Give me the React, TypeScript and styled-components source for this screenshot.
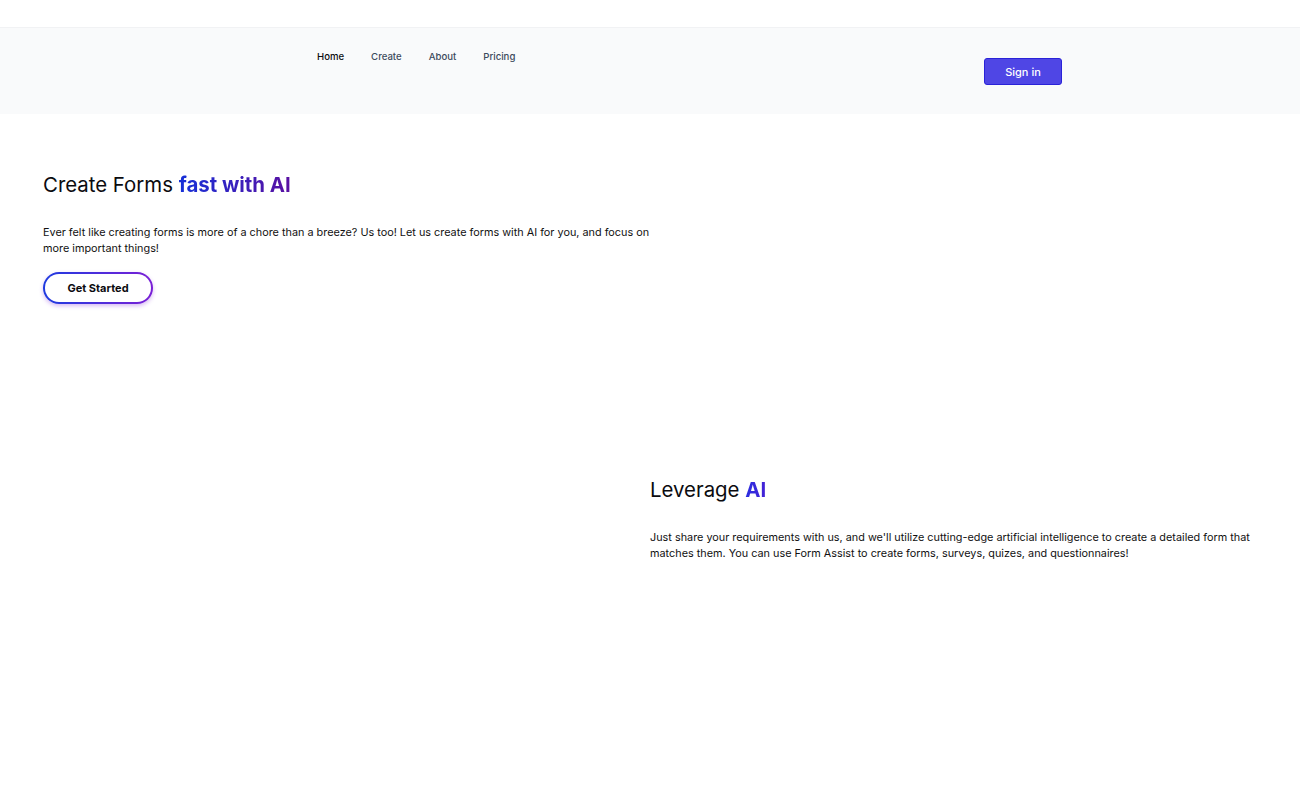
import React from 'react'
import styled, { createGlobalStyle } from 'styled-components'

const GlobalStyle = createGlobalStyle`
  * {
    box-sizing: border-box;
  }

  body {
    margin: 0;
    background: #ffffff;
    font-family: Inter, "Noto Sans", sans-serif;
    color: #111111;
  }
`

const links = ['Home', 'Create', 'About', 'Pricing']

export default function App() {
  return (
    <>
      <GlobalStyle />
      <TopStrip />
      <Nav>
        <Links>
          {links.map((link, index) => (
            <NavLink key={link} href="#" $active={index === 0}>
              {link}
            </NavLink>
          ))}
        </Links>
        <SignIn>Sign in</SignIn>
      </Nav>

      <Hero>
        <Column>
          <Title>
            Create Forms <Highlight>fast with AI</Highlight>
          </Title>
          <Text>
            Ever felt like creating forms is more of a chore than a breeze? Us too! Let us create forms
            with AI for you, and focus on more important things!
          </Text>
          <GetStarted>Get Started</GetStarted>
        </Column>
        <div />
      </Hero>

      <Feature>
        <div />
        <Column>
          <Title>
            Leverage <Highlight $short>AI</Highlight>
          </Title>
          <Text>
            Just share your requirements with us, and we'll utilize cutting-edge artificial intelligence
            to create a detailed form that matches them. You can use Form Assist to create forms,
            surveys, quizes, and questionnaires!
          </Text>
        </Column>
      </Feature>
    </>
  )
}

const TopStrip = styled.div`
  height: 28px;
  background: #ffffff;
  border-bottom: 1px solid #f1f2f4;
`

const Nav = styled.nav`
  height: 86px;
  background: #f9fafb;
  display: flex;
  align-items: flex-start;
  padding-left: 317px;
`

const Links = styled.div`
  display: flex;
  gap: 27px;
  padding-top: 21px;
  width: 667px;
`

const NavLink = styled.a<{ $active?: boolean }>`
  font-size: 9.6px;
  font-weight: 500;
  line-height: 16px;
  text-decoration: none;
  color: ${p => (p.$active ? '#0b0b0f' : '#3c4a5c')};
`

const SignIn = styled.button`
  margin-top: 30px;
  width: 78px;
  height: 27px;
  background: #4f46e5;
  border: 1px solid #2a22d8;
  border-radius: 3px;
  color: #ffffff;
  font-family: Inter, sans-serif;
  font-size: 11px;
  font-weight: 500;
  cursor: pointer;
`

const Hero = styled.section`
  display: grid;
  grid-template-columns: 607px 607px;
  padding: 57px 43px 0;
  min-height: 362px;
`

const Feature = styled.section`
  display: grid;
  grid-template-columns: 607px 607px;
  padding: 0 43px;
`

const Column = styled.div`
  display: flex;
  flex-direction: column;
  align-items: flex-start;
`

const Title = styled.h1`
  margin: 0 0 25px;
  font-size: 20.4px;
  font-weight: 400;
  line-height: 28px;
  color: #0b0b0f;
`

const Highlight = styled.span<{ $short?: boolean }>`
  font-weight: 700;
  background: ${p =>
    p.$short
      ? 'linear-gradient(90deg, #2a2ee0, #4422d6)'
      : 'linear-gradient(90deg, #1530d8, #5a10a2)'};
  -webkit-background-clip: text;
  background-clip: text;
  color: transparent;
`

const Text = styled.p`
  margin: 0 0 16px;
  font-size: 10.85px;
  line-height: 16px;
  color: #111111;
`

const GetStarted = styled.button`
  width: 110px;
  height: 32px;
  border: 2px solid transparent;
  border-radius: 999px;
  background:
    linear-gradient(#ffffff, #ffffff) padding-box,
    linear-gradient(90deg, #1e3ae0, #7a1fd6) border-box;
  box-shadow: 0 2px 4px rgba(122, 31, 214, 0.3);
  font-family: Inter, sans-serif;
  font-size: 11px;
  font-weight: 700;
  color: #0b0b0f;
  cursor: pointer;
`
